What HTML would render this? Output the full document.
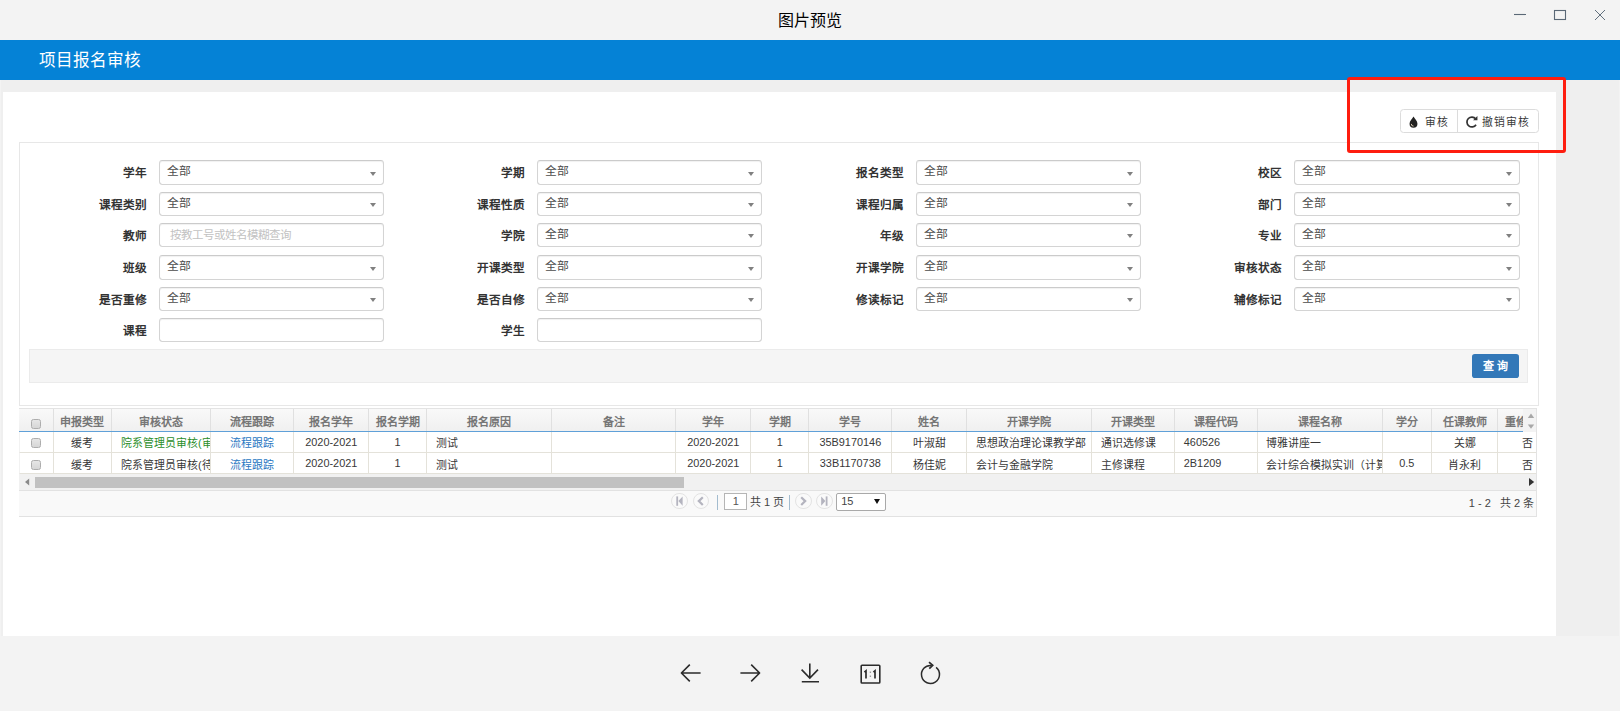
<!DOCTYPE html>
<html lang="zh-CN">
<head>
<meta charset="utf-8">
<title>图片预览</title>
<style>
*{margin:0;padding:0}
html,body{width:1620px;height:711px;overflow:hidden;background:#f3f3f3;font-family:"Liberation Sans",sans-serif;}
body{position:relative}
.abs,.lb,.ip,.th,.td{position:absolute}
#title{left:0;top:0;width:1620px;height:40px;text-align:center;line-height:42px;font-size:16px;color:#000}
#wc{position:absolute;left:0;top:0}
#img{left:1px;top:40px;width:1617.800px;height:596px;background:#efefef}
#nav{left:0;top:40px;width:1620px;height:39.6px;background:#0582d6;color:#fff;font-size:16.6px;line-height:41px}
#nav span{position:absolute;left:38.800px;top:0}
#panel{left:2.6px;top:92.3px;width:1553px;height:543.5px;background:#fff}
#bg{left:1399.6px;top:109.2px;width:139.4px;height:24.2px;border:1px solid #dcdcdc;border-radius:3.5px;box-sizing:border-box;background:#fff}
#bg .dv{position:absolute;left:56.6px;top:0;width:1px;height:22.2px;background:#dcdcdc}
#bg span{position:absolute;top:0;line-height:24.4px;font-size:10.8px;color:#3a3a3a;letter-spacing:.9px;white-space:nowrap}
#red{left:1347.3px;top:77.2px;width:218.8px;height:75.8px;border:3.1px solid #fe1d0f;border-radius:3px;box-sizing:border-box}
#fs{left:19.4px;top:142.4px;width:1519.6px;height:263.3px;border:1px solid #e7e7e7;box-sizing:border-box}
#bar{left:29.4px;top:348.8px;width:1498.6px;height:34px;border:1px solid #ebebeb;box-sizing:border-box;background:#f5f5f5}
#qry{left:1472.4px;top:353.5px;width:46.2px;height:24.2px;background:#3378b8;border-radius:2.8px;color:#fff;font-size:11px;font-weight:bold;text-align:center;line-height:25px;letter-spacing:0}
.lb{width:100px;height:24.4px;line-height:26.0px;text-align:right;font-weight:bold;font-size:11.6px;color:#333;white-space:nowrap}
.ip{width:225.3px;height:24.4px;border:1px solid #d4d4d4;border-top-color:#cbcbcb;border-radius:3.4px;box-sizing:border-box;background:#fff;box-shadow:inset 0 1px 1px rgba(0,0,0,.06)}
.ip .sv{position:absolute;left:6.800px;top:0;line-height:20.0px;font-size:11.8px;color:#4c4c4c}
.ip .ph{position:absolute;left:9.5px;top:0;line-height:22.0px;font-size:11.5px;color:#c2c2c2;white-space:nowrap}
.ip .ar{position:absolute;right:7px;top:10.4px;width:0;height:0;border-left:3.2px solid transparent;border-right:3.2px solid transparent;border-top:4.6px solid #808080}
#ghd{left:19px;top:408px;width:1517.2px;height:23.4px;background:linear-gradient(#f9f9f9,#f0f0f0);border-top:1px solid #e3e3e3;box-sizing:border-box}
#gln{left:19px;top:430.8px;width:1504.2px;height:1.2px;background:#5fa0d8}
.th{top:408.6px;height:22.4px;line-height:26.6px;text-align:center;font-size:11px;color:#767676;font-weight:bold;border-left:1px solid #e0e0e0;box-sizing:border-box;white-space:nowrap;overflow:hidden}
.th.first{border-left:none} .td.first{border-left-color:#f2f2f2} .td .cb{position:absolute;left:10.600px;top:6.600px}
.td{height:21.4px;line-height:21.6px;font-size:10.9px;color:#383838;border-left:1px solid #e4e2da;border-bottom:1px solid #e4e2da;box-sizing:border-box;white-space:nowrap;overflow:hidden;background:#fff}
.td.r0{top:431.8px} .td.r1{top:453px}
.td.c{text-align:center} .td.l{text-align:left;padding-left:8.8px} .td.e{text-align:left;padding-left:24.2px}
.td .g{color:#2b8e2b} .td .a{color:#2877c2} .td .z{position:relative;top:1.600px}
.cb{display:inline-block;width:10.2px;height:10px;border:1px solid #adadad;border-radius:2.4px;background:linear-gradient(#e6e6e6,#d6d6d6);box-sizing:border-box;vertical-align:middle;position:relative;top:-.5px}
.th .cb{top:1.2px}
#vs{left:1523.4px;top:408.6px;width:12.8px;height:23px;background:#f3f3f3}
#grt{left:1536.2px;top:408px;width:1px;height:108.6px;background:#e3e3e3}
#rr{display:none}
#hs{left:19.3px;top:474.4px;width:1517px;height:15.8px;background:#f1f1f1}
#hst{left:35.2px;top:476.6px;width:649.2px;height:11.2px;background:#c1c1c1}
#pg{left:19.3px;top:490.2px;width:1517px;height:26.4px;background:#f9f9f9;border-top:1px solid #e2e2e2;border-bottom:1px solid #e2e2e2;box-sizing:border-box;font-size:11px;color:#444}
#pgi{position:absolute;left:.7px;top:0;width:1516.300px;height:24.400px}
.pc{position:absolute;top:1.4px;width:16.6px;height:16.6px;border:1px solid #e3e3e3;border-radius:50%;box-sizing:border-box;background:#fafafa}
.ps{position:absolute;top:3.4px;width:1px;height:15px;background:#a3bccf}
#pin{position:absolute;left:704.4px;top:2.2px;width:23px;height:17px;border:1px solid #b5b5b5;box-sizing:border-box;background:#fff;text-align:center;line-height:14.6px;font-size:11px;color:#555}
#ptx{position:absolute;left:730px;top:0;line-height:23.6px;font-size:11px;color:#444;white-space:nowrap}
#psl{position:absolute;left:816.4px;top:2.2px;width:49.6px;height:17.2px;border:1px solid #a9a9a9;border-radius:2px;box-sizing:border-box;background:#fff;line-height:15.6px;font-size:11px;color:#444;padding-left:3.800px}
#psl i{position:absolute;right:4.600px;top:5px;width:0;height:0;border-left:3px solid transparent;border-right:3px solid transparent;border-top:5.4px solid #111}
#pinfo{position:absolute;right:2px;top:0;line-height:25.6px;font-size:11px;color:#444;white-space:pre}
</style>
</head>
<body>
<div class="abs" id="title">图片预览</div>
<svg id="wc" width="1620" height="40" viewBox="0 0 1620 40" fill="none" stroke="#5a6876" stroke-width="1.1">
<path d="M1514 14.5H1526"/>
<rect x="1554.5" y="10.5" width="11" height="9"/>
<path d="M1595 10L1605 20M1605 10L1595 20" stroke-width=".95"/>
</svg>
<div class="abs" id="img"></div>
<div class="abs" id="nav"><span>项目报名审核</span></div>
<div class="abs" id="panel"></div>

<div class="abs" id="bg">
<svg style="position:absolute;left:7.600px;top:5.800px" width="11" height="12.100" viewBox="0 0 10 11"><path d="M5 .4C6.2 2.6 8.6 4.6 8.6 7a3.6 3.6 0 0 1-7.2 0C1.400 4.600 3.800 2.600 5 .4Z" fill="#222"/><path d="M3 7.200a2 2 0 0 0 2 2" stroke="#d9c9b0" stroke-width=".9" fill="none"/></svg>
<span style="left:24.6px">审核</span>
<i class="dv"></i>
<svg style="position:absolute;left:64.400px;top:5px" width="13.800" height="13.800" viewBox="0 0 12 12" fill="none" stroke="#333" stroke-width="1.5"><path d="M9.600 8.400A4.300 4.300 0 1 1 9.300 3.300"/><path d="M10.800 .8V4.600H7Z" fill="#333" stroke="none"/></svg>
<span style="left:81.400px">撤销审核</span>
</div>

<div class="abs" id="fs"></div>
<label class="lb" style="left:46.70px;top:160.30px">学年</label>
<div class="ip" style="left:159.00px;top:160.30px"><span class="sv">全部</span><i class="ar"></i></div>
<label class="lb" style="left:424.70px;top:160.30px">学期</label>
<div class="ip" style="left:537.00px;top:160.30px"><span class="sv">全部</span><i class="ar"></i></div>
<label class="lb" style="left:803.70px;top:160.30px">报名类型</label>
<div class="ip" style="left:916.00px;top:160.30px"><span class="sv">全部</span><i class="ar"></i></div>
<label class="lb" style="left:1182.10px;top:160.30px">校区</label>
<div class="ip" style="left:1294.40px;top:160.30px"><span class="sv">全部</span><i class="ar"></i></div>
<label class="lb" style="left:46.70px;top:191.70px">课程类别</label>
<div class="ip" style="left:159.00px;top:191.70px"><span class="sv">全部</span><i class="ar"></i></div>
<label class="lb" style="left:424.70px;top:191.70px">课程性质</label>
<div class="ip" style="left:537.00px;top:191.70px"><span class="sv">全部</span><i class="ar"></i></div>
<label class="lb" style="left:803.70px;top:191.70px">课程归属</label>
<div class="ip" style="left:916.00px;top:191.70px"><span class="sv">全部</span><i class="ar"></i></div>
<label class="lb" style="left:1182.10px;top:191.70px">部门</label>
<div class="ip" style="left:1294.40px;top:191.70px"><span class="sv">全部</span><i class="ar"></i></div>
<label class="lb" style="left:46.70px;top:223.00px">教师</label>
<div class="ip" style="left:159.00px;top:223.00px"><span class="ph">按教工号或姓名模糊查询</span></div>
<label class="lb" style="left:424.70px;top:223.00px">学院</label>
<div class="ip" style="left:537.00px;top:223.00px"><span class="sv">全部</span><i class="ar"></i></div>
<label class="lb" style="left:803.70px;top:223.00px">年级</label>
<div class="ip" style="left:916.00px;top:223.00px"><span class="sv">全部</span><i class="ar"></i></div>
<label class="lb" style="left:1182.10px;top:223.00px">专业</label>
<div class="ip" style="left:1294.40px;top:223.00px"><span class="sv">全部</span><i class="ar"></i></div>
<label class="lb" style="left:46.70px;top:255.30px">班级</label>
<div class="ip" style="left:159.00px;top:255.30px"><span class="sv">全部</span><i class="ar"></i></div>
<label class="lb" style="left:424.70px;top:255.30px">开课类型</label>
<div class="ip" style="left:537.00px;top:255.30px"><span class="sv">全部</span><i class="ar"></i></div>
<label class="lb" style="left:803.70px;top:255.30px">开课学院</label>
<div class="ip" style="left:916.00px;top:255.30px"><span class="sv">全部</span><i class="ar"></i></div>
<label class="lb" style="left:1182.10px;top:255.30px">审核状态</label>
<div class="ip" style="left:1294.40px;top:255.30px"><span class="sv">全部</span><i class="ar"></i></div>
<label class="lb" style="left:46.70px;top:286.70px">是否重修</label>
<div class="ip" style="left:159.00px;top:286.70px"><span class="sv">全部</span><i class="ar"></i></div>
<label class="lb" style="left:424.70px;top:286.70px">是否自修</label>
<div class="ip" style="left:537.00px;top:286.70px"><span class="sv">全部</span><i class="ar"></i></div>
<label class="lb" style="left:803.70px;top:286.70px">修读标记</label>
<div class="ip" style="left:916.00px;top:286.70px"><span class="sv">全部</span><i class="ar"></i></div>
<label class="lb" style="left:1182.10px;top:286.70px">辅修标记</label>
<div class="ip" style="left:1294.40px;top:286.70px"><span class="sv">全部</span><i class="ar"></i></div>
<label class="lb" style="left:46.70px;top:318.00px">课程</label>
<div class="ip" style="left:159.00px;top:318.00px"></div>
<label class="lb" style="left:424.70px;top:318.00px">学生</label>
<div class="ip" style="left:537.00px;top:318.00px"></div>
<div class="abs" id="bar"></div>
<div class="abs" id="qry">查 询</div>

<div class="abs" id="ghd"></div>
<div class="th first" style="left:19.3px;width:33.5px"><i class="cb"></i></div>
<div class="th" style="left:52.8px;width:58.4px">申报类型</div>
<div class="th" style="left:111.2px;width:99.1px">审核状态</div>
<div class="th" style="left:210.3px;width:83.0px">流程跟踪</div>
<div class="th" style="left:293.3px;width:75.0px">报名学年</div>
<div class="th" style="left:368.3px;width:57.7px">报名学期</div>
<div class="th" style="left:426.0px;width:125.4px">报名原因</div>
<div class="th" style="left:551.4px;width:123.9px">备注</div>
<div class="th" style="left:675.3px;width:75.0px">学年</div>
<div class="th" style="left:750.3px;width:58.0px">学期</div>
<div class="th" style="left:808.3px;width:83.0px">学号</div>
<div class="th" style="left:891.3px;width:74.7px">姓名</div>
<div class="th" style="left:966.0px;width:125.0px">开课学院</div>
<div class="th" style="left:1091.0px;width:83.0px">开课类型</div>
<div class="th" style="left:1174.0px;width:82.7px">课程代码</div>
<div class="th" style="left:1256.7px;width:125.0px">课程名称</div>
<div class="th" style="left:1381.7px;width:49.3px">学分</div>
<div class="th" style="left:1431.0px;width:66.3px">任课教师</div>
<div class="th" style="left:1497.3px;width:26.1px;text-align:left;padding-left:7px;box-sizing:border-box">重修</div>
<div class="td c r0 first" style="left:19.3px;width:33.5px"><i class="cb"></i></div>
<div class="td c r0" style="left:52.8px;width:58.4px"><span class="z">缓考</span></div>
<div class="td l r0" style="left:111.2px;width:99.1px"><span class="z g">院系管理员审核(审核</span></div>
<div class="td c r0" style="left:210.3px;width:83.0px"><span class="z a">流程跟踪</span></div>
<div class="td c r0" style="left:293.3px;width:75.0px">2020-2021</div>
<div class="td c r0" style="left:368.3px;width:57.7px">1</div>
<div class="td l r0" style="left:426.0px;width:125.4px"><span class="z">测试</span></div>
<div class="td l r0" style="left:551.4px;width:123.9px"></div>
<div class="td c r0" style="left:675.3px;width:75.0px">2020-2021</div>
<div class="td c r0" style="left:750.3px;width:58.0px">1</div>
<div class="td c r0" style="left:808.3px;width:83.0px">35B9170146</div>
<div class="td c r0" style="left:891.3px;width:74.7px"><span class="z">叶淑甜</span></div>
<div class="td l r0" style="left:966.0px;width:125.0px"><span class="z">思想政治理论课教学部</span></div>
<div class="td l r0" style="left:1091.0px;width:83.0px"><span class="z">通识选修课</span></div>
<div class="td l r0" style="left:1174.0px;width:82.7px">460526</div>
<div class="td l r0" style="left:1256.7px;width:125.0px"><span class="z">博雅讲座一</span></div>
<div class="td c r0" style="left:1381.7px;width:49.3px"></div>
<div class="td c r0" style="left:1431.0px;width:66.3px"><span class="z">关娜</span></div>
<div class="td e r0" style="left:1497.3px;width:38.9px"><span class="z">否</span></div>
<div class="td c r1 first" style="left:19.3px;width:33.5px"><i class="cb"></i></div>
<div class="td c r1" style="left:52.8px;width:58.4px"><span class="z">缓考</span></div>
<div class="td l r1" style="left:111.2px;width:99.1px"><span class="z">院系管理员审核(待审</span></div>
<div class="td c r1" style="left:210.3px;width:83.0px"><span class="z a">流程跟踪</span></div>
<div class="td c r1" style="left:293.3px;width:75.0px">2020-2021</div>
<div class="td c r1" style="left:368.3px;width:57.7px">1</div>
<div class="td l r1" style="left:426.0px;width:125.4px"><span class="z">测试</span></div>
<div class="td l r1" style="left:551.4px;width:123.9px"></div>
<div class="td c r1" style="left:675.3px;width:75.0px">2020-2021</div>
<div class="td c r1" style="left:750.3px;width:58.0px">1</div>
<div class="td c r1" style="left:808.3px;width:83.0px">33B1170738</div>
<div class="td c r1" style="left:891.3px;width:74.7px"><span class="z">杨佳妮</span></div>
<div class="td l r1" style="left:966.0px;width:125.0px"><span class="z">会计与金融学院</span></div>
<div class="td l r1" style="left:1091.0px;width:83.0px"><span class="z">主修课程</span></div>
<div class="td l r1" style="left:1174.0px;width:82.7px">2B1209</div>
<div class="td l r1" style="left:1256.7px;width:125.0px"><span class="z">会计综合模拟实训（计算</span></div>
<div class="td c r1" style="left:1381.7px;width:49.3px">0.5</div>
<div class="td c r1" style="left:1431.0px;width:66.3px"><span class="z">肖永利</span></div>
<div class="td e r1" style="left:1497.3px;width:38.9px"><span class="z">否</span></div>
<div class="abs" id="rr"></div>
<div class="abs" id="vs"><svg width="13" height="23" viewBox="0 0 13 23"><path d="M4.800 9L8 4.600L11.200 9Z" fill="#a8a8a8"/><path d="M4.800 15.400L8 19.800L11.200 15.400Z" fill="#a8a8a8"/></svg></div>
<div class="abs" id="gln"></div>
<div class="abs" id="hs"><svg style="position:absolute;left:.7px;top:0" width="1517" height="16" viewBox="0 0 1517 16"><path d="M9.200 4.600V11.400L5 8Z" fill="#8a8a8a"/><path d="M1509 4V12L1514.200 8Z" fill="#333"/></svg></div>
<div class="abs" id="hst"></div>
<div class="abs" id="pg"><div id="pgi">
<i class="pc" style="left:651.400px"></i><i class="pc" style="left:672.900px"></i>
<i class="ps" style="left:697px"></i>
<div id="pin">1</div><div id="ptx">共 1 页</div>
<i class="ps" style="left:769px"></i>
<i class="pc" style="left:775.100px"></i><i class="pc" style="left:796.300px"></i>
<svg style="position:absolute;left:649.200px;top:0" width="170" height="26" viewBox="0 0 170 26" fill="none" stroke="#b4b4bf" stroke-width="2.200">
<path d="M8.200 5.400V14.800" stroke-width="1.800"/><path d="M13.600 5.400L9.400 10.100L13.600 14.800Z" fill="#b4b4bf" stroke="none"/>
<path d="M33.800 6.200L29.800 10.100L33.800 14"/>
<path d="M132.200 6.200L136.200 10.100L132.200 14"/>
<path d="M157.600 5.400V14.800" stroke-width="1.800"/><path d="M152.200 5.400L156.400 10.100L152.200 14.800Z" fill="#b4b4bf" stroke="none"/>
</svg>
<div id="psl">15<i></i></div>
<div id="pinfo">1 - 2   共 2 条</div>
</div></div>
<div class="abs" id="grt"></div>

<div class="abs" id="red"></div>

<svg class="abs" style="left:660px;top:650px" width="300" height="50" viewBox="660 650 300 50" fill="none" stroke="#2b2b2b" stroke-width="1.600">
<path d="M700.600 673H681.600M689.800 664.600L681.400 673L689.800 681.400" stroke-linejoin="round"/>
<path d="M740.400 673H759.400M751.200 664.600L759.600 673L751.200 681.400" stroke-linejoin="round"/>
<path d="M809.800 663.400V677.600M801.600 669.600L809.800 678L818 669.600M801.800 681.700H819"/>
<rect x="861.200" y="665.200" width="18.600" height="17.800" rx=".8" stroke-width="1.600"/>
<path d="M864.400 672.200L866 670.800V678.600M873.400 672.200L875 670.800V678.600" stroke-width="1.700" stroke-linejoin="miter"/>
<path d="M870.400 671.600V673M870.400 675.600V677" stroke="#9a9a9a" stroke-width="1.300"/>
<path d="M936.100 667.400A9 9 0 1 1 931.600 665.500" stroke-width="1.500"/>
<path d="M929 662.200L932.700 665.300L929.300 668.600" stroke-width="1.700"/>
</svg>

</body>
</html>
